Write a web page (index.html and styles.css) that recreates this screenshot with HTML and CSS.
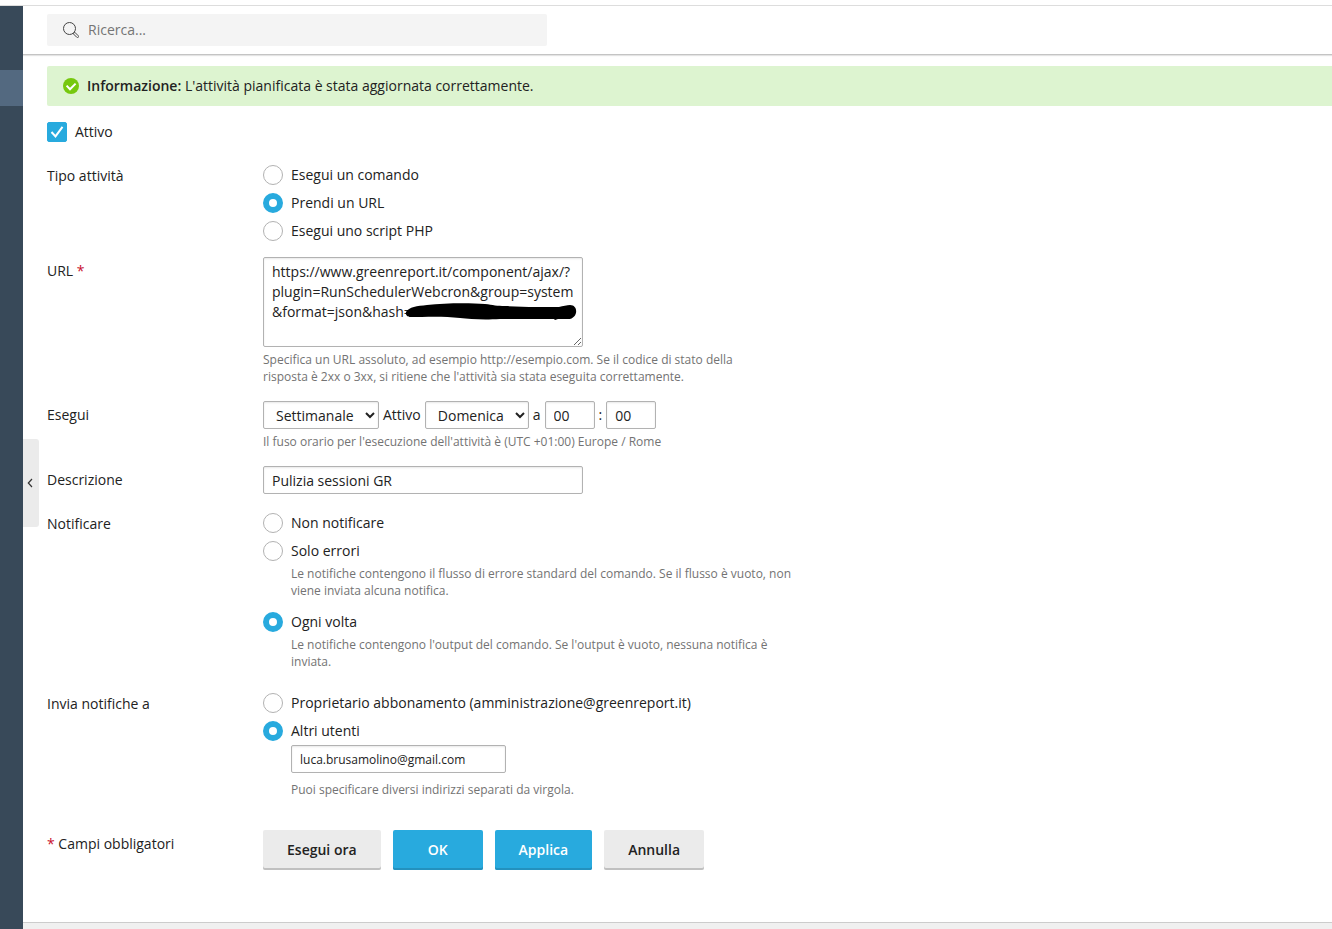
FILE: index.html
```html
<!DOCTYPE html>
<html lang="it">
<head>
<meta charset="utf-8">
<meta name="viewport" content="width=device-width, initial-scale=1">
<title>Attività pianificata</title>
<link rel="stylesheet" href="styles.css">
</head>
<body>
<div class="app">
  <nav class="sidebar" aria-label="Navigazione">
    <a class="sidebar-current" href="#" aria-label="Attività pianificate"></a>
    <button class="collapse" type="button" aria-label="Comprimi">
      <svg width="6" height="10" viewBox="0 0 6 10"><path d="M5 1 1.3 5 5 9" fill="none" stroke="#333" stroke-width="1.2"/></svg>
    </button>
  </nav>
  <div class="page">
    <header class="topbar">
      <label class="search">
        <svg width="16" height="16" viewBox="0 0 16 16" fill="none" stroke="#444"><circle cx="6.5" cy="6.5" r="6"/><path d="m10.3 11.8 1.5-1.5 3.5 3.5a1 1 0 0 1-1.5 1.5z"/></svg>
        <input type="search" placeholder="Ricerca..." aria-label="Ricerca">
      </label>
    </header>
    <main class="content">
      <div class="alert" role="status">
        <svg width="16" height="16" viewBox="0 0 16 16"><circle cx="8" cy="8" r="8" fill="#76c80e"/><path d="m3.6 7.6 3.4 3.6 5.6-5.6" fill="none" stroke="#fff" stroke-width="2"/></svg>
        <p><strong>Informazione:</strong> L'attività pianificata è stata aggiornata correttamente.</p>
      </div>
      <form class="form">
        <label class="choice active-toggle">
          <span class="check-wrap">
            <input class="check" type="checkbox" checked>
            <svg class="check-mark" width="20" height="20" viewBox="0 0 20 20"><path d="m4.5 10 4 4.4L15.5 4.8" fill="none" stroke="#fff" stroke-width="2"/></svg>
          </span>
          Attivo
        </label>

        <div class="row" role="radiogroup" aria-labelledby="type-label">
          <span class="row-label" id="type-label">Tipo attività</span>
          <div class="choices">
            <label class="choice"><input class="radio" type="radio" name="type">Esegui un comando</label>
            <label class="choice"><input class="radio" type="radio" name="type" checked>Prendi un URL</label>
            <label class="choice"><input class="radio" type="radio" name="type">Esegui uno script PHP</label>
          </div>
        </div>

        <div class="row">
          <label class="row-label" for="url">URL <span class="required">*</span></label>
          <div class="field">
            <div class="url-box">
              <textarea class="input url" id="url" spellcheck="false">https://www.greenreport.it/component/ajax/?
plugin=RunSchedulerWebcron&amp;group=system
&amp;format=json&amp;hash=</textarea>
              <svg class="scribble" width="172" height="18" viewBox="0 0 172 18"><path d="M1 9C4 4 12 3 22 2 40 0 65 0 80 1c8 1 12 2 20 2 20 1 40 1 54 1 4-1 8-2 11-2 9 0 8 14-2 14-4 0-7 0-10 0l-3 1-1-1c-20 0-36 0-54 0-18 1-30 0-40-1-16-2-35-1-50-1C4 14 0 13 1 9Z"/></svg>
            </div>
            <p class="hint">Specifica un URL assoluto, ad esempio http://esempio.com. Se il codice di stato della risposta è 2xx o 3xx, si ritiene che l'attività sia stata eseguita correttamente.</p>
          </div>
        </div>

        <div class="row" role="group" aria-labelledby="run-label">
          <span class="row-label" id="run-label">Esegui</span>
          <div class="field">
            <div class="schedule">
              <select class="input period" aria-label="Frequenza"><option>Settimanale</option></select>
              <span>Attivo</span>
              <select class="input day" aria-label="Giorno"><option>Domenica</option></select>
              <span>a</span>
              <input class="input time" type="text" value="00" aria-label="Ore">
              <span>:</span>
              <input class="input time" type="text" value="00" aria-label="Minuti">
            </div>
            <p class="hint">Il fuso orario per l'esecuzione dell'attività è (UTC +01:00) Europe / Rome</p>
          </div>
        </div>

        <div class="row">
          <label class="row-label" for="description">Descrizione</label>
          <div class="field"><input class="input description" id="description" type="text" value="Pulizia sessioni GR"></div>
        </div>

        <div class="row" role="radiogroup" aria-labelledby="notify-label">
          <span class="row-label" id="notify-label">Notificare</span>
          <div class="choices">
            <label class="choice"><input class="radio" type="radio" name="notify">Non notificare</label>
            <div>
              <label class="choice"><input class="radio" type="radio" name="notify">Solo errori</label>
              <p class="hint choice-hint">Le notifiche contengono il flusso di errore standard del comando. Se il flusso è vuoto, non viene inviata alcuna notifica.</p>
            </div>
            <div>
              <label class="choice"><input class="radio" type="radio" name="notify" checked>Ogni volta</label>
              <p class="hint choice-hint">Le notifiche contengono l'output del comando. Se l'output è vuoto, nessuna notifica è inviata.</p>
            </div>
          </div>
        </div>

        <div class="row" role="radiogroup" aria-labelledby="send-label">
          <span class="row-label" id="send-label">Invia notifiche a</span>
          <div class="choices">
            <label class="choice"><input class="radio" type="radio" name="send">Proprietario abbonamento (amministrazione@greenreport.it)</label>
            <div>
              <label class="choice"><input class="radio" type="radio" name="send" checked>Altri utenti</label>
              <div class="recipients">
                <input class="input email" type="text" value="luca.brusamolino@gmail.com" aria-label="Indirizzi e-mail">
                <p class="hint">Puoi specificare diversi indirizzi separati da virgola.</p>
              </div>
            </div>
          </div>
        </div>

        <div class="row actions">
          <span class="row-label"><span class="required">*</span> Campi obbligatori</span>
          <div class="buttons">
            <button class="button" type="button">Esegui ora</button>
            <button class="button primary ok" type="button">OK</button>
            <button class="button primary" type="button">Applica</button>
            <button class="button" type="button">Annulla</button>
          </div>
        </div>
      </form>
    </main>
    <footer class="footer"></footer>
  </div>
</div>
</body>
</html>
```
FILE: styles.css
```css
* { box-sizing: border-box; }

body {
  margin: 0;
  padding-top: 5px;
  min-height: 100vh;
  display: flex;
  background: #fff;
  color: #222;
  font: 14px/20px "Open Sans", "Noto Sans", sans-serif;
}

input, select, textarea, button { font: inherit; color: inherit; margin: 0; }
p { margin: 0; }
svg { display: block; flex: none; }

.app { flex: 1; display: flex; min-width: 0; border-top: 1px solid #ddd; }

.sidebar {
  position: relative;
  flex: none;
  width: 23px;
  padding-top: 64px;
  background: #384959;
}
.sidebar-current { display: block; height: 36px; background: #536980; }

.collapse {
  position: absolute;
  left: 100%;
  top: 433px;
  width: 16px;
  height: 88px;
  padding: 0 0 0 4px;
  border: 0;
  border-radius: 0 3px 3px 0;
  background: #ebebeb;
}

.page { flex: 1; min-width: 0; display: flex; flex-direction: column; }

.topbar {
  padding: 8px 24px;
  border-bottom: 1px solid #c4c4c4;
  box-shadow: 0 1px 1px #e4e4e4;
}
.search {
  display: flex;
  align-items: center;
  gap: 9px;
  max-width: 500px;
  height: 32px;
  padding: 0 16px;
  border-radius: 2px;
  background: #f4f4f4;
}
.search input { flex: 1; min-width: 0; padding: 0; border: 0; outline: 0; background: none; }
.search input::placeholder { color: #757575; opacity: 1; }

.content { flex: 1; padding: 11px 0 24px 24px; }

.alert {
  display: flex;
  align-items: center;
  gap: 8px;
  padding: 10px 16px;
  border-radius: 2px 0 0 2px;
  background: #ddf4d0;
}
.alert strong { font-weight: 600; }

.form { display: flex; flex-direction: column; gap: 16px; padding-top: 16px; }

.row { display: grid; grid-template-columns: 216px minmax(0, 1fr); }
.row-label { padding-top: 4px; }
.required { color: #c8102e; }

.choices { display: flex; flex-direction: column; gap: 8px; padding-top: 3px; }
.choice { display: flex; align-items: center; gap: 8px; }
.active-toggle { align-self: flex-start; margin-bottom: 4px; }

.radio, .check { appearance: none; flex: none; width: 20px; height: 20px; background: #fff; }
.radio { border: 1px solid #b2b2b2; border-radius: 50%; }
.radio:checked { border: 6px solid #28aade; }
.check-wrap { position: relative; display: flex; }
.check { border: 1px solid #b2b2b2; border-radius: 2px; }
.check:checked { border-color: #28aade; background: #28aade; }
.check-mark { position: absolute; inset: 0; pointer-events: none; }

.hint { max-width: 500px; margin-top: 4px; color: #737373; font-size: 12px; line-height: 17px; }
.choice-hint { max-width: 510px; margin: 4px 0 0 28px; padding-bottom: 4px; }
.choices > div + div { padding-top: 1px; }

.input {
  display: block;
  height: 28px;
  padding: 0 8px;
  border: 1px solid #b2b2b2;
  border-radius: 2px;
  background: #fff;
  box-shadow: inset 0 1px 2px #e8e8e8;
}
.url-box { position: relative; width: 320px; }
.url { width: 100%; height: 90px; padding: 4px 4px 4px 8px; resize: both; overflow: hidden; }
.scribble { position: absolute; left: 142px; top: 46px; pointer-events: none; }

.schedule { display: flex; align-items: center; gap: 4px; }
.period { width: 116px; }
.day { width: 104px; }
.time { width: 50px; }
.description { width: 320px; }

.recipients { padding: 4px 0 0 28px; }
.recipients .hint { margin-top: 8px; }
.email { width: 215px; font-size: 12px; }

.actions { padding-top: 16px; }
.buttons { display: flex; gap: 12px; }
.button {
  height: 40px;
  padding: 0 24px;
  border: 0;
  border-radius: 2px;
  background: #ebebeb;
  box-shadow: inset 0 -2px #c0c0c0;
  font-weight: 600;
}
.primary { background: #28aade; box-shadow: inset 0 -2px #2391be; color: #fff; }
.ok { min-width: 90px; }

.footer { height: 7px; border-top: 1px solid #ccc; background: #f0f0f0; }
```
